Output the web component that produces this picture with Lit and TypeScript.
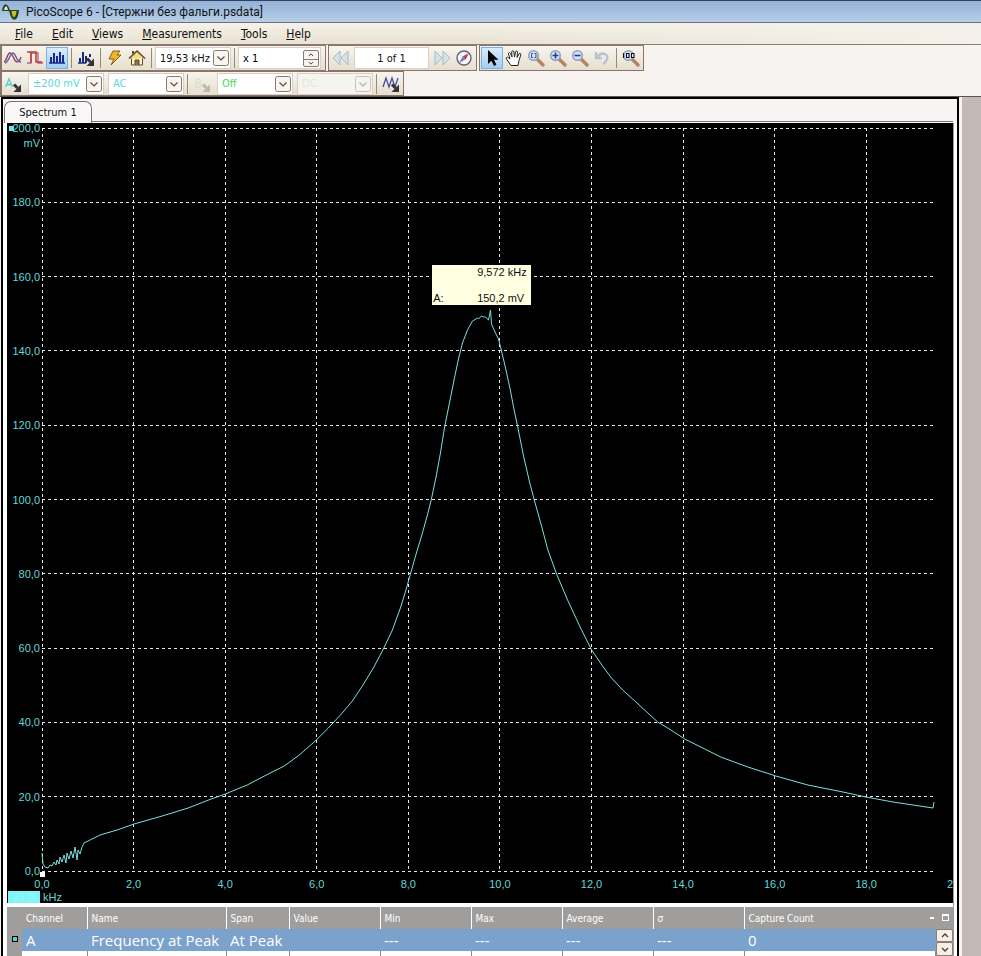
import { LitElement, html, svg, css, nothing } from "lit";
import { customElement } from "lit/decorators.js";
import { classMap } from "lit/directives/class-map.js";

const lens = (mark: unknown) => svg`
  <path d="M10.500 10.500l5.500 5.500" stroke="#b88264" stroke-width="3.400" stroke-linecap="round"/>
  <circle cx="6.500" cy="6.500" r="4.800" fill="#d3e2f4" stroke="#8fa0c4" stroke-width="1.500"/>${mark}`;

const corner = (color: string) => svg`
  <path d="M10 9.500l3.500 3.500" stroke="${color}" stroke-width="3"/><path d="M17 9.500v7.500H9.500z" fill="${color}"/>`;

const icons: Record<string, unknown> = {
  scope: svg`<path d="M0 13C3 12 3 4 6 4s4 9 7 9 3-3 4-5" fill="none" stroke="#a03850" stroke-width="1.400"/>
    <path d="M1 14C5 13 6 4 9 4s3 9 8 9" fill="none" stroke="#6a62b0" stroke-width="1.400"/>`,
  persistence: svg`<path d="M1 14h4V4h7v10h5" fill="none" stroke="#9a6aa0" stroke-width="1.300"/>
    <path d="M1 3h9v10h6M5 3v11" fill="none" stroke="#cc3830" stroke-width="1.500"/>`,
  spectrum: svg`<path d="M1 14h16" stroke="#1a2a8c" stroke-width="1.500"/><path d="M3 14V8M6 14V4M9 14V7M12 14V3M15 14V6" fill="none" stroke="#1a2a8c" stroke-width="2"/>`,
  spectrumOptions: svg`<path d="M1 14h8" stroke="#1a2a8c" stroke-width="1.500"/><path d="M3 14V9M6 14V3M9 14V7M13 8V5" fill="none" stroke="#1a2a8c" stroke-width="2"/>${corner("#333")}`,
  bolt: svg`<path d="M7 2h7l-3 4h4L5 16l3-6H3z" fill="#f0b62c" stroke="#8a5c10"/>`,
  home: svg`<path d="M3.500 9v7h11V9" fill="#fff6d0" stroke="#5c4a22"/><path d="M1 9.500L9 2l8 7.500" fill="#f4dc8a" stroke="#5c4a22" stroke-width="1.500"/>
    <path d="M7 16v-5h4v5" fill="#8c7648" stroke="#5c4a22"/><path d="M4 5V2h2v2" fill="#5c4a22"/>`,
  back: svg`<path d="M8 2v14L1 9zM16 2v14L9 9z" fill="#d4e2e8" stroke="#a6bcc8"/>`,
  forward: svg`<path d="M2 2v14l7-7zM10 2v14l7-7z" fill="#d4e2e8" stroke="#a6bcc8"/>`,
  compass: svg`<circle cx="9" cy="9" r="7" fill="#f8f6fa" stroke="#646078" stroke-width="1.400"/>
    <path d="M14 4L7.500 7.500 9 9z" fill="#d03048"/><path d="M14 4l-3.500 6.500L9 9z" fill="#9c2038"/>
    <path d="M4 14l3.500-6.500L9 9zM4 14l6.500-3.500L9 9z" fill="#7286c0"/>`,
  pointer: svg`<path d="M5 1v14l3.400-3.200L11 17l2.400-1.200L11 10.800h4.500z" fill="#000"/>`,
  hand: svg`<path d="M6 16.500L1.500 10c-1-1.500.8-2.300 2-1.200L5 10 3.500 5c-.4-1.500 1.400-2 2-.5L7 8 6.700 3c0-1.600 2-1.600 2.200 0L9.500 8l1-5c.3-1.500 2-1.200 2 .3L12 8.500l2-3.500c.8-1.300 2.300-.6 1.800.9L14 11.500l-1 5z" fill="#fff" stroke="#222"/>`,
  zoomWindow: lens(svg`<path d="M6 4.500H4.500v4H6M7.500 4.500H9v4H7.500" fill="none" stroke="#3c4c98"/>`),
  zoomIn: lens(svg`<path d="M3.500 6.500h6M6.500 3.500v6" stroke="#2c3c90" stroke-width="1.600"/>`),
  zoomOut: lens(svg`<path d="M3.500 6.500h6" stroke="#2c3c90" stroke-width="1.600"/>`),
  zoomFull: svg`${lens(nothing)}<path d="M1.500 4v5M4.500 4.500h2.500v4H4.500zM9.500 4.500h2.500v4H9.500z" fill="#eef4fa" stroke="#111" stroke-width="1.100"/>`,
  undo: svg`<path d="M3 3v6h6" fill="none" stroke="#b8c2d2" stroke-width="2.500"/><path d="M4 8c5-6 12-3 10 2-.6 2-2 4-4 5" fill="none" stroke="#b8c2d2" stroke-width="2.500"/>`,
  channelA: svg`<path d="M1.500 12L5 4l3.500 8M3 9.500h4" fill="none" stroke="#4ad0d0" stroke-width="1.300"/>${corner("#333")}`,
  channelB: svg`<path d="M3 4h3q2.500 2 0 4H3zM3 8h3.500q2.500 2 0 4H3z" fill="none" stroke="#cfe6cc" stroke-width="1.300"/>${corner("#bdb9ac")}`,
  filter: svg`<path d="M1 12l3-9 3 9 3-9 3 9 3-9" fill="none" stroke="#4a4aa0" stroke-width="1.300"/>${corner("#333")}`,
};

const icon = (name: string) => html`<svg class="icon" viewBox="0 0 18 18" aria-hidden="true">${icons[name]}</svg>`;

const MAX_KHZ = 19.48;
const MAX_MV = 200;
const TRACE =
  "0,725 1,736 3,739 6,740 8,737 10,738 12,734 14,737 15,732 17,736 18,729 20,734 22,727 24,735 25,725 27,731 29,723 31,730 33,719 35,732 36,722 38,726 40,719 42,715 48,712 58,707 75,702 92,696 120,688 146,680 169,671 183,666 205,657 226,646 242,638 257,627 274,612 286,600 299,586 310,573 320,558 331,540 341,521 350,502 358,480 363,464 368,446 374,425 380,405 385,387 389,371 394,347 398,325 402,300 407,275 412,250 416,231 420,215 425,202 430,193 435,190 436,191 439,188 441,189 443,189 446,192 448,182 449,196 453,205 456,211 459,223 463,240 468,263 471,279 475,298 481,328 487,354 492,373 499,398 505,421 514,446 525,472 538,500 549,522 560,538 568,549 580,562 590,571 603,583 615,594 625,600 642,611 660,620 678,629 705,639 733,648 765,657 800,664 823,669 850,674 890,680 891,674";

const headers = ["Name", "Span", "Value", "Min", "Max", "Average", "σ"];
const rows = [
  { selected: true, cells: ["A", "Frequency at Peak", "At Peak", "", "---", "---", "---", "---", "0"] },
  { selected: false, cells: ["A", "Amplitude at Peak", "At Peak", "", "---", "---", "---", "---", "0"] },
];

@customElement("pico-select")
class PicoSelect extends LitElement {
  static properties = { value: {}, label: {}, tone: {}, off: { type: Boolean } };
  declare value: string;
  declare label: string;
  declare tone: string;
  declare off: boolean;

  static styles = css`
    :host { display: grid; width: 76px; height: 22px; background: #fff; border: 1px solid #d8d0c8; box-sizing: border-box; }
    select, .arrow { grid-area: 1 / 1; }
    select {
      appearance: none; border: 0; background: none; padding: 0 0 0 4px; margin: 0; opacity: 1; min-width: 0;
      font: 11px "DejaVu Sans Condensed", "DejaVu Sans", sans-serif; color: #111;
    }
    .cyan { color: #5cd6da; }
    .green { color: #4ed85a; }
    .faint { color: #d6ecd6; }
    .arrow { justify-self: end; align-self: center; width: 16px; height: 16px; margin-right: 1px; pointer-events: none; }
    :host([off]) { background: #f6f4ee; }
    :host([off]) .arrow { opacity: 0.4; }
  `;

  render() {
    return html`<select class=${this.tone ?? ""} aria-label=${this.label} ?disabled=${this.off}><option>${this.value}</option></select>
      <svg class="arrow" viewBox="0 0 16 16"><rect x="0.500" y="0.500" width="15" height="15" rx="2" fill="#f8f5ef" stroke="#857a70"/>
      <path d="M4.500 6.500L8 10l3.500-3.500" fill="none" stroke="#5c4c40" stroke-width="1.200"/></svg>`;
  }
}

@customElement("app-root")
class AppRoot extends LitElement {
  static styles = css`
    :host {
      display: flex; flex-direction: column; height: 100vh; min-height: 480px; overflow: hidden;
      background: #f6f3f1; color: #111; font: 12px "DejaVu Sans Condensed", "DejaVu Sans", sans-serif;
    }
    button { font: inherit; padding: 0; margin: 0; border: 0; background: none; color: inherit; }
    .title {
      display: flex; align-items: center; gap: 6px; height: 23px; box-sizing: border-box; padding-left: 2px;
      border-top: 1px solid #34425c; border-bottom: 1px solid #6c7078;
      background: linear-gradient(#94b2d8, #a4c0e0 50%, #b8cfe8); font: 12px Roboto, "Noto Sans", sans-serif;
    }
    .title h1 { font: inherit; margin: 0; }
    .logo { width: 18px; height: 18px; }
    .menu {
      display: flex; align-items: center; gap: 19px; height: 22px; padding-left: 15px; box-sizing: border-box;
      background: linear-gradient(90deg, transparent 50%, #f4f1ea), linear-gradient(#f6f2ea, #e8e2d2);
      border-bottom: 1px solid #8c7c74;
    }
    .bars { display: flex; gap: 2px; height: 26px; }
    .bars + .bars { height: 25px; }
    .group {
      display: flex; align-items: center; box-sizing: border-box; padding: 0 1px;
      border: 1px solid #8a756c; background: linear-gradient(#f8f5ee, #e6dfce);
    }
    .group.main { width: 326px; border-left-width: 2px; padding: 0; }
    .group.channels { width: 404px; border-left-width: 2px; padding: 0; }
    .tool { display: grid; place-items: center; width: 22px; height: 22px; flex: none; }
    .tool.on { background: linear-gradient(#dceefb, #9fcdf2); box-shadow: inset 0 0 0 1px #78b4e0; }
    .icon { width: 18px; height: 18px; }
    .sep { width: 1px; height: 20px; background: #98887c; margin: 0 3px; flex: none; }
    .gap { margin-left: 4px; }
    .field { border: 1px solid #d8d0c8; background: #fff; height: 22px; box-sizing: border-box; font: 11px "DejaVu Sans Condensed", "DejaVu Sans", sans-serif; color: #111; }
    .page { width: 75px; text-align: center; padding: 0; margin: 0 2px; }
    .spin { display: flex; align-items: center; width: 83px; padding-right: 1px; }
    .spin input { flex: 1; min-width: 0; border: 0; padding: 0 4px; font: inherit; background: none; }
    .steps { display: flex; flex-direction: column; border: 1px solid #857a70; border-radius: 2px; background: #f8f5ef; }
    .steps button { display: grid; width: 14px; height: 8px; place-items: center; }
    .steps button + button { border-top: 1px solid #857a70; height: 7px; }
    .steps svg { width: 6px; height: 4px; }

    .work { display: flex; flex: 1; min-height: 0; border-top: 1px solid #555; }
    .dock { width: 19px; background: #c4bab5; margin-left: 3px; }
    .frame {
      flex: 1; min-width: 0; display: flex; flex-direction: column; border: 2px solid #000; border-bottom: 0;
      margin-left: 1px; box-sizing: border-box; background: #fff;
    }
    .tabs { display: flex; height: 24px; padding: 2px 4px 0 1px; box-sizing: border-box; background: #f7f4f3; }
    .tab {
      width: 88px; border: 1px solid #777; border-bottom: 0; border-radius: 7px 7px 0 0; font-size: 11px; flex: none;
      background: #faf8f7;
    }
    .rest { flex: 1; border-bottom: 1px solid #777; margin-bottom: 1px; }
    .view { display: flex; flex-direction: column; flex: 1; min-height: 0; margin: 0 3px 0 4px; border-right: 1px solid #999; }
    .chart {
      display: grid; grid-template: 1fr / 1fr; flex: 1; min-height: 0; padding: 5px 19px 32px 35px; background: #000;
      color: #62d8d8; font: 11px/14px "Liberation Sans", Arial, sans-serif; overflow: hidden; position: relative;
    }
    .plot { position: relative; }
    .plot svg { width: 100%; height: 100%; display: block; overflow: visible; }
    .grid { stroke: #e8e8e8; stroke-dasharray: 3 3; shape-rendering: crispEdges; }
    .trace { fill: none; stroke: #7ce0e0; stroke-width: 1; }
    .y { position: absolute; right: 100%; margin: -7px 2px 0 0; text-align: right; }
    .x { position: absolute; top: 100%; margin-top: 6px; width: 40px; margin-left: -20px; text-align: center; }
    .y-unit { position: absolute; right: 100%; top: 8px; margin-right: 2px; }
    .x-unit { position: absolute; left: 36px; bottom: -1px; }
    .scale { position: absolute; left: 1px; bottom: 0; width: 32px; height: 12px; background: #80f4f8; color: #98fafa; line-height: 12px; text-align: center; }
    .origin { position: absolute; left: -2px; bottom: -6px; width: 5px; height: 5px; background: #fff; }
    .handle { position: absolute; left: 2px; top: 3px; width: 5px; height: 5px; background: #62e8e8; z-index: 1; }
    .note {
      position: absolute; display: grid; grid-template-columns: 44px 1fr; align-content: space-between;
      width: 99px; height: 40px; padding: 0 1px; box-sizing: border-box; background: #ffffe1; color: #111;
    }
    .note span:nth-child(1) { grid-column: 2; }

    .measures { display: flex; flex: none; height: 49px; margin-top: 4px; background: #a09e9d; overflow: hidden; color: #fff; }
    .mark { width: 15px; display: flex; justify-content: center; padding-top: 29px; box-sizing: border-box; flex: none; }
    .mark i { width: 4px; height: 4px; border: 1px solid #000; background: #52d4d0; }
    table { flex: 1; border-collapse: collapse; table-layout: fixed; min-width: 0; width: 0; height: 66px; }
    th, td { padding: 0 0 0 4px; text-align: left; font-weight: 400; white-space: nowrap; overflow: hidden; box-sizing: border-box; }
    th { font-size: 10px; height: 22px; border-right: 1px solid #fff; }
    th:last-child { border-right: 0; }
    td { font: 15px/20px "Open Sans", "Noto Sans", sans-serif; height: 22px; }
    .sel td { background: #7aa2cc; }
    .plain td { background: #fff; color: #111; border-right: 1px solid #888; }
    .side { width: 17px; flex: none; display: flex; flex-direction: column; position: relative; }
    .window { display: flex; justify-content: flex-end; gap: 8px; height: 22px; align-items: center; margin-left: -10px; padding: 0 4px; box-sizing: border-box; }
    .window button { width: 4px; height: 2px; background: #fff; flex: none; }
    .window button + button { width: 7px; height: 7px; background: none; border: 1px solid #fff; border-top-width: 2px; box-sizing: border-box; }
    .scroll { height: 14px; background: #f6efe6; border: 1px solid #8c7c74; border-radius: 2px; display: grid; place-items: center; box-sizing: border-box; }
    .scroll svg { width: 8px; height: 5px; }
    .c0 { width: 65px; } .c1 { width: 139px; } .c2 { width: 63px; } .cn { width: 91px; }
  `;

  tool(name: string, label: string, on = false) {
    return html`<button class=${classMap({ tool: true, on })} aria-label=${label}>${icon(name)}</button>`;
  }

  chevron(up: boolean) {
    return html`<svg viewBox="0 0 8 5"><path d=${up ? "M1 4l3-3 3 3" : "M1 1l3 3 3-3"} fill="none" stroke="#4c3c34" stroke-width="1.300"/></svg>`;
  }

  chart() {
    const ys = Array.from({ length: 11 }, (_, i) => i * 20);
    const xs = Array.from({ length: 11 }, (_, i) => i * 2);
    const px = (k: number) => `${(k / MAX_KHZ) * 100}%`;
    const py = (v: number) => `${100 - (v / MAX_MV) * 100}%`;
    const text = (v: number) => v.toFixed(1).replace(".", ",");
    return html`<div class="chart">
      <i class="handle"></i>
      <div class="plot">
        <svg>
          ${ys.map((v) => svg`<line class="grid" x1="0" x2="100%" y1=${py(v)} y2=${py(v)}/>`)}
          ${xs.slice(0, 10).map((k) => svg`<line class="grid" x1=${px(k)} x2=${px(k)} y1="0" y2="100%"/>`)}
          <svg viewBox="0 0 891 743" preserveAspectRatio="none"><polyline class="trace" vector-effect="non-scaling-stroke" points=${TRACE}/></svg>
        </svg>
        ${ys.map((v) => html`<span class="y" style="top:${py(v)}">${text(v)}</span>`)}
        ${xs.map((k) => html`<span class="x" style="left:${px(k)}">${text(k)}</span>`)}
        <span class="y-unit">mV</span>
        <i class="origin"></i>
        <div class="note" style="left:${px(8.52)};top:${py(163)}"><span>9,572 kHz</span><span>A:</span><span>150,2 mV</span></div>
      </div>
      <span class="scale">x1,0</span><span class="x-unit">kHz</span>
    </div>`;
  }

  render() {
    const menu = ["File", "Edit", "Views", "Measurements", "Tools", "Help"];
    return html`
      <header class="title">
        <svg class="logo" viewBox="0 0 18 18"><path d="M0 8C1-1 6-1 8 8z" fill="#24402c"/><path d="M2 7c1-5 3-5 4 0z" fill="#dfe6c8"/>
          <path d="M7 7h10c-1 13-8 13-10 0z" fill="#30401c"/><path d="M9.500 8h5c-1 8-4 8-5 0z" fill="#c4c42c"/></svg>
        <h1>PicoScope 6 - [Стержни без фальги.psdata]</h1>
      </header>
      <nav class="menu">${menu.map((m) => html`<button><u>${m[0]}</u>${m.slice(1)}</button>`)}</nav>
      <div class="bars">
        <div class="group main">
          ${this.tool("scope", "Scope mode")}${this.tool("persistence", "Persistence mode")}${this.tool("spectrum", "Spectrum mode", true)}
          <i class="sep"></i>${this.tool("spectrumOptions", "Spectrum options")}<i class="sep"></i>
          ${this.tool("bolt", "Auto setup")}${this.tool("home", "Home")}<i class="sep"></i>
          <pico-select value="19,53 kHz" label="Frequency range"></pico-select><i class="sep"></i>
          <div class="field spin"><input aria-label="Zoom factor" value="x 1" /><span class="steps">
            <button aria-label="Increase">${this.chevron(true)}</button><button aria-label="Decrease">${this.chevron(false)}</button></span></div>
        </div>
        <div class="group">
          ${this.tool("back", "Previous buffer")}<input class="field page" aria-label="Buffer" value="1 of 1" />
          ${this.tool("forward", "Next buffer")}${this.tool("compass", "Buffer navigator")}
        </div>
        <div class="group">
          ${this.tool("pointer", "Select", true)}${this.tool("hand", "Pan")}${this.tool("zoomWindow", "Zoom window")}
          ${this.tool("zoomIn", "Zoom in")}${this.tool("zoomOut", "Zoom out")}${this.tool("undo", "Undo zoom")}
          <i class="sep"></i>${this.tool("zoomFull", "Zoom to 100%")}
        </div>
      </div>
      <div class="bars">
        <div class="group channels">
          ${this.tool("channelA", "Channel A options")}
          <pico-select class="gap" tone="cyan" value="±200 mV" label="Channel A range"></pico-select>
          <pico-select class="gap" tone="cyan" value="AC" label="Channel A coupling"></pico-select><i class="sep"></i>
          ${this.tool("channelB", "Channel B options")}
          <pico-select class="gap" tone="green" value="Off" label="Channel B range"></pico-select>
          <pico-select class="gap" tone="faint" value="DC" label="Channel B coupling" off></pico-select><i class="sep"></i>
          ${this.tool("filter", "Filter options")}
        </div>
      </div>
      <main class="work">
        <section class="frame">
          <div class="tabs"><button class="tab">Spectrum 1</button><span class="rest"></span></div>
          <div class="view">
            ${this.chart()}
            <div class="measures">
              <span class="mark"><i></i></span>
              <table>
                <colgroup><col class="c0" /><col class="c1" /><col class="c2" />${[3, 4, 5, 6, 7].map(() => html`<col class="cn" />`)}<col /></colgroup>
                <thead><tr><th>Channel</th>${headers.map((h) => html`<th>${h}</th>`)}<th>Capture Count</th></tr></thead>
                <tbody>${rows.map((r) => html`<tr class=${r.selected ? "sel" : "plain"}>${r.cells.map((c) => html`<td>${c}</td>`)}</tr>`)}</tbody>
              </table>
              <div class="side">
                <div class="window"><button aria-label="Minimize"></button><button aria-label="Maximize"></button></div>
                <button class="scroll" aria-label="Scroll up">${this.chevron(true)}</button>
                <button class="scroll" aria-label="Scroll down">${this.chevron(false)}</button>
              </div>
            </div>
          </div>
        </section>
        <aside class="dock"></aside>
      </main>`;
  }
}
